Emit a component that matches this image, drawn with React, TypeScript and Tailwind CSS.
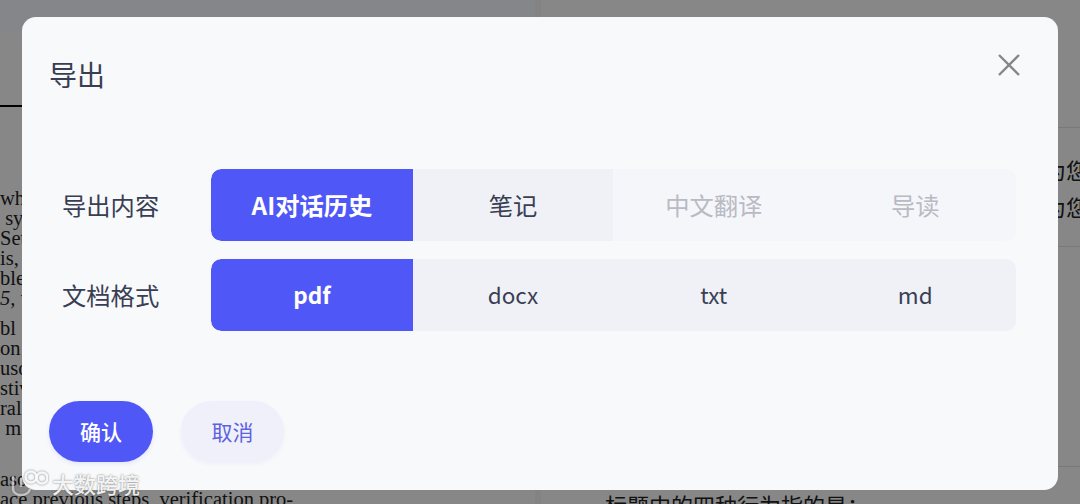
import React from "react";

const cjk = "font-['Noto_Sans_CJK_SC','Noto_Sans',sans-serif]";

const contentTabs = [
  { label: "AI对话历史", state: "active" },
  { label: "笔记", state: "normal" },
  { label: "中文翻译", state: "disabled" },
  { label: "导读", state: "disabled" },
];

const formatTabs = [
  { label: "pdf", state: "active" },
  { label: "docx", state: "normal" },
  { label: "txt", state: "normal" },
  { label: "md", state: "normal" },
];

function OptionRow({ label, tabs, latin }: { label: string; tabs: { label: string; state: string }[]; latin?: boolean }) {
  return (
    <div className="flex items-center">
      <div className="w-[162px] pl-[13px] text-[24.3px] text-[#3a3e54]">{label}</div>
      <div className={`grid h-[72px] w-[805px] grid-cols-[202px_200px_201.5px_1fr] overflow-hidden rounded-[10px] bg-[#f5f6f9] ${latin ? "text-[22.5px]" : "text-[24.3px]"}`}>
        {tabs.map((tab) => (
          <div
            key={tab.label}
            className={
              tab.state === "active"
                ? "flex items-center justify-center rounded-l-[10px] bg-[#4f58f7] font-semibold text-white"
                : tab.state === "normal"
                  ? "flex items-center justify-center bg-[#f0f1f6] text-[#3a3e54]"
                  : "flex items-center justify-center text-[#b8bac4]"
            }
          >
            {tab.label}
          </div>
        ))}
      </div>
    </div>
  );
}

function Watermark() {
  return (
    <div className="absolute bottom-[7px] left-[10px] flex items-center gap-[4px] text-white/90 [text-shadow:0_0_2px_rgba(0,0,0,0.55)]">
      <svg width="38" height="28" viewBox="0 0 38 28" fill="none" stroke="currentColor" strokeWidth="2.4" className="drop-shadow-[0_0_1px_rgba(0,0,0,0.5)]">
        <path d="M3 7v12c0 5 4 7 8 7s8-2 9-6" strokeOpacity="0.65" />
        <path d="M11 9v9" strokeOpacity="0.65" />
        <circle cx="21" cy="8" r="5.5" />
        <circle cx="32" cy="9" r="5.5" />
      </svg>
      <span className="text-[22px] leading-none font-medium">大数跨境</span>
    </div>
  );
}

export default function App() {
  return (
    <div className={`relative flex h-[504px] w-[1080px] overflow-hidden bg-[#f6f6f6] ${cjk}`}>
      {/* page behind the dialog */}
      <div className="w-[535px] shrink-0 overflow-hidden font-['Liberation_Serif',serif] text-[20.5px] leading-[20px] whitespace-pre text-[#222]">
        <div className="h-[33px] bg-[#f2f4fa]" />
        <div className="mt-[72px] h-[2px] w-full bg-black" />
        <div className="mt-[81px]">
          <div>wh</div>
          <div>{" sy"}</div>
          <div>Set</div>
          <div>is,</div>
          <div>ble</div>
          <div className="italic">5, v</div>
        </div>
        <div className="mt-[10px]">
          <div>bl</div>
          <div>on</div>
          <div>uso</div>
          <div>stiv</div>
          <div>ral</div>
          <div>{" m"}</div>
        </div>
        <div className="mt-[31px]">
          <div>ason</div>
          <div>ace previous steps, verification pro-</div>
        </div>
      </div>
      <div className="w-[6px] shrink-0 bg-[#eeeeee]" />
      <div className="min-w-0 flex-1 text-[22px] text-[#222]">
        <div className="mt-[127px] h-[120px] border-y border-[#dddddd] pt-[23px] pl-[503px] leading-[37px] whitespace-nowrap">
          <div>为您</div>
          <div>为您</div>
        </div>
        <div className="mt-[219px] border-t border-[#dddddd] pt-[22px] pl-[64px] leading-[30px] whitespace-nowrap">
          标题中的四种行为指的是：
        </div>
      </div>

      {/* dimmed overlay and dialog */}
      <div className="absolute inset-0 bg-black/45 pt-[17px] pl-[22px]">
        <div className="flex h-[473px] w-[1036px] flex-col rounded-[14px] bg-[#f8f9fb] px-[27px] pt-[38px]">
          <div className="flex items-start justify-between">
            <div className="text-[28px] leading-[38px] text-[#3a3e54]">导出</div>
            <svg width="24" height="24" viewBox="0 0 24 24" fill="none" stroke="#85878c" strokeWidth="2.4" className="mt-[-2px] mr-[10px]">
              <path d="M2 2l20 20M22 2L2 22" />
            </svg>
          </div>
          <div className="mt-[76px] flex flex-col gap-[18px]">
            <OptionRow label="导出内容" tabs={contentTabs} />
            <OptionRow label="文档格式" tabs={formatTabs} latin />
          </div>
          <div className="mt-[70px] flex gap-[28px] text-[21px]">
            <button className="h-[61px] w-[104px] rounded-full bg-[#4f58f7] font-medium text-white shadow-[0_2px_4px_rgba(79,88,247,0.12)]">
              确认
            </button>
            <button className="h-[61px] w-[103px] rounded-full bg-[#f0f0fa] text-[#5c63e0] shadow-[0_2px_4px_rgba(79,88,247,0.06)]">
              取消
            </button>
          </div>
        </div>
      </div>

      <Watermark />
    </div>
  );
}
